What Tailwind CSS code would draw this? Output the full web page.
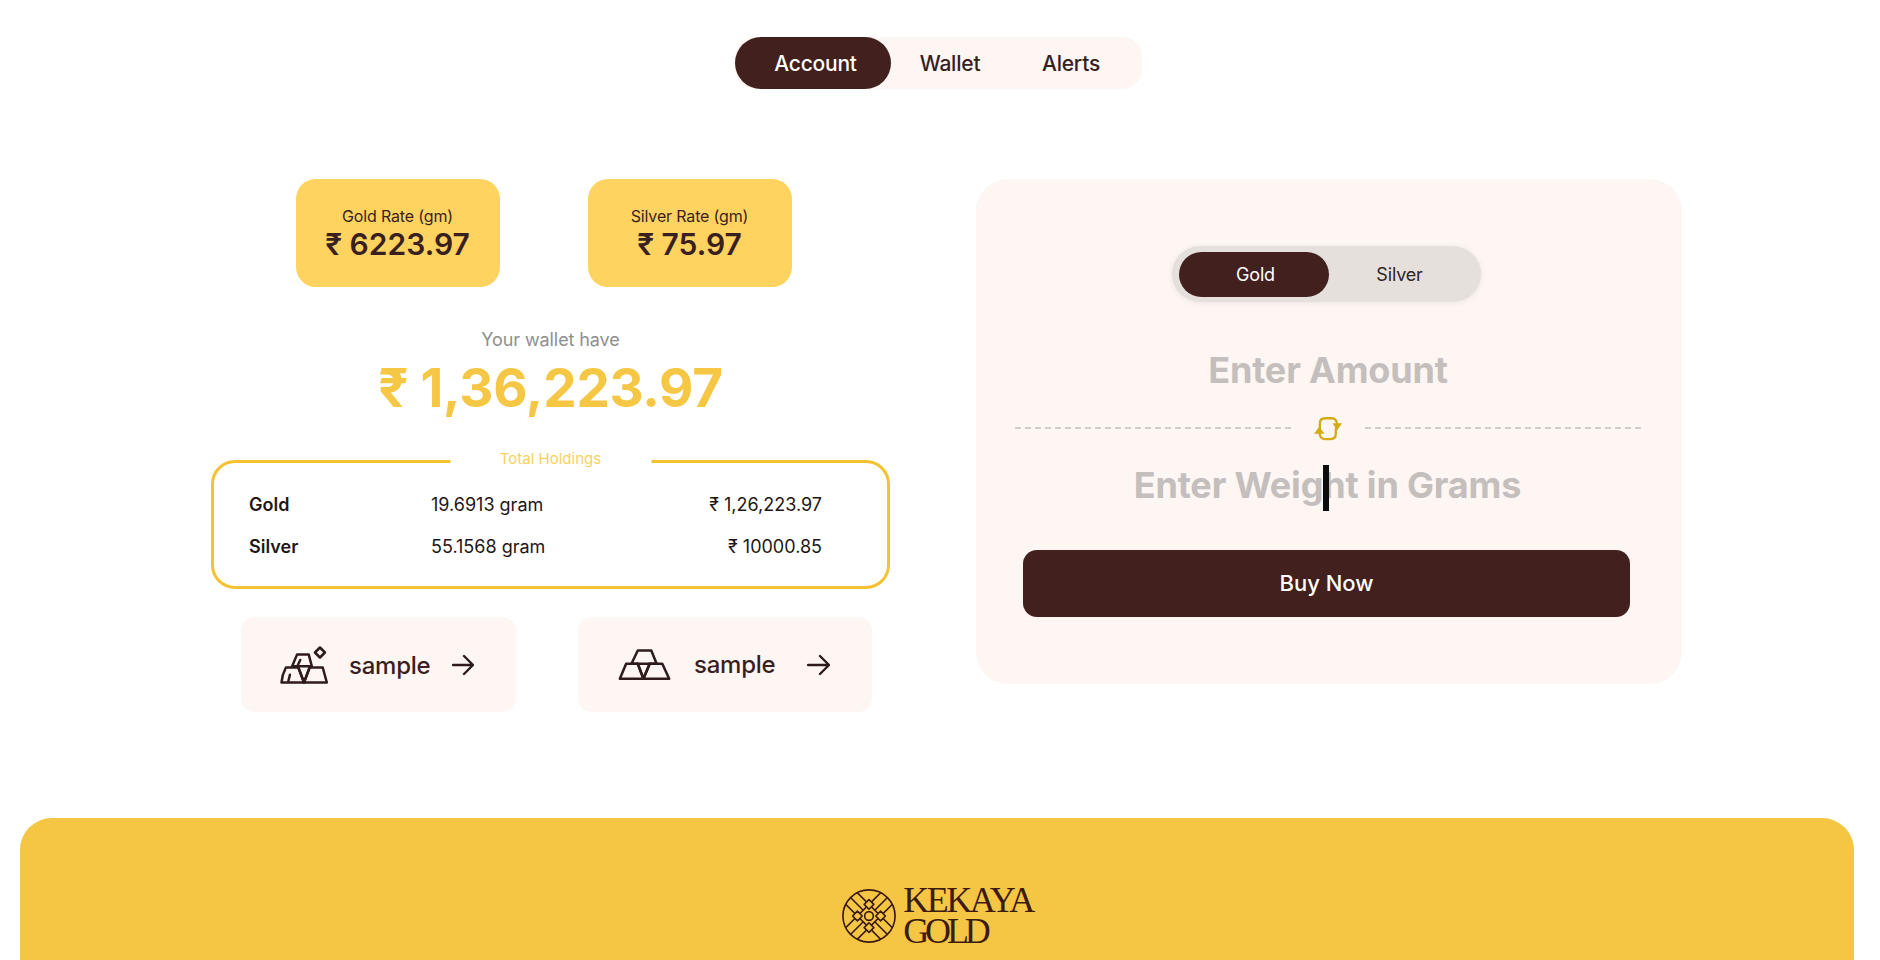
<!DOCTYPE html>
<html lang="en">
<head>
<meta charset="utf-8">
<script src="https://cdn.jsdelivr.net/npm/@tailwindcss/browser@4"></script>
<title>Kekaya Gold</title>
</head>
<body class="bg-white font-['Inter',sans-serif] text-[#3a1f1f] h-[960px] overflow-hidden">
<nav class="pt-[37px] flex justify-center">
  <div class="flex items-center h-[52px] w-[407px] mr-[3px] bg-[#fdf6f3] rounded-[20px] text-[21px] tracking-[-0.01em] font-medium">
    <a class="w-[156px] h-full pl-[5px] pt-[1px] rounded-full bg-[#42201e] text-white flex items-center justify-center">Account</a>
    <a class="w-[118px] pt-[1px] text-center text-[#35201f]">Wallet</a>
    <a class="w-[124px] pt-[1px] text-center text-[#35201f]">Alerts</a>
  </div>
</nav>

<main class="mt-[90px] flex pl-[211px] gap-[86px]">
  <section class="w-[679px] flex flex-col items-center">
    <div class="flex gap-[88px] pr-[14px]">
      <div class="w-[204px] h-[108px] rounded-[20px] bg-[#ffd35f] flex flex-col items-center justify-center pt-[1px]">
        <span class="text-[16px] leading-[20px] mb-[1px] tracking-[-0.01em]">Gold Rate (gm)</span>
        <span class="text-[30px] leading-[34px] font-semibold">₹ 6223.97</span>
      </div>
      <div class="w-[204px] h-[108px] rounded-[20px] bg-[#ffd35f] flex flex-col items-center justify-center pt-[1px]">
        <span class="text-[16px] leading-[20px] mb-[1px] tracking-[-0.01em]">Silver Rate (gm)</span>
        <span class="text-[30px] leading-[34px] font-semibold">₹ 75.97</span>
      </div>
    </div>
    <p class="mt-[41px] text-[18px] leading-[24px] tracking-[-0.005em] text-[#8f8f8f]">Your wallet have</p>
    <p class="mt-[4px] text-[53px] leading-[64px] font-bold tracking-[-0.005em] text-[#f6c744]">₹ 1,36,223.97</p>

    <div class="mt-[40px] w-full h-[129px] border-[3px] border-[#f5c233] rounded-[24px] pl-[35px] pt-[30px] relative">
      <span class="absolute left-1/2 -translate-x-1/2 -top-[13px] w-[201px] bg-white text-center text-[15px] leading-[18px] text-[#f7d25e]">Total Holdings</span>
      <div class="grid grid-cols-[182px_1fr_auto] items-center text-[18px] leading-[24px] pr-[65px] gap-y-[18px] text-[#1f1616]">
        <span class="font-semibold">Gold</span>
        <span>19.6913 gram</span>
        <span class="text-right">₹ 1,26,223.97</span>
        <span class="font-semibold">Silver</span>
        <span>55.1568 gram</span>
        <span class="text-right">₹ 10000.85</span>
      </div>
    </div>

    <div class="mt-[28px] w-full flex pl-[30px] gap-[62px] text-[24px] font-medium tracking-[-0.01em]">
      <a class="w-[275px] h-[95px] rounded-[14px] bg-[#fdf6f3] flex items-center pl-[38px]">
        <svg class="w-[50px] h-[40px] mr-[3px]" viewBox="50 40 160 128" fill="none" stroke="#2f1b1b" stroke-width="8" stroke-linejoin="round" stroke-linecap="round">
          <path d="M108 70H145L155 108H92Z"/>
          <path d="M72 112H112L130 160H58Q60 135 72 112Z"/>
          <path d="M148 112H190L203 160H130Z"/>
          <path d="M112 112L130 160L148 112"/>
          <path d="M118 88L110 105M85 135L80 155"/>
          <path d="M181 48L197 64L181 80L165 64Z"/>
        </svg>
        <span class="ml-[17px] w-[103px] pt-[3px]">sample</span>
        <svg class="w-[22px] h-[22px]" viewBox="0 0 22 22" fill="none" stroke="#2f1b1b" stroke-width="2.4" stroke-linecap="round" stroke-linejoin="round"><path d="M1 11H21M12 2L21 11L12 20"/></svg>
      </a>
      <a class="w-[294px] h-[95px] rounded-[14px] bg-[#fdf6f3] flex items-center pl-[40px]">
        <svg class="w-[54px] h-[33px] mr-[3px]" viewBox="50 50 170 105" fill="none" stroke="#2f1b1b" stroke-width="8" stroke-linejoin="round" stroke-linecap="round">
          <path d="M112 58H155L172 100H92Z"/>
          <path d="M75 100H112L130 148H55Z"/>
          <path d="M150 100H190L212 148H130Z"/>
          <path d="M112 100L130 148L150 100"/>
        </svg>
        <span class="ml-[19px] w-[113px] pt-[1px]">sample</span>
        <svg class="w-[23px] h-[22px]" viewBox="0 0 23 22" fill="none" stroke="#2f1b1b" stroke-width="2.4" stroke-linecap="round" stroke-linejoin="round"><path d="M1 11H22M13 2L22 11L13 20"/></svg>
      </a>
    </div>
  </section>

  <section class="w-[706px] h-[505px] rounded-[32px] bg-[#fdf6f3] flex flex-col items-center">
    <div class="mt-[67px] w-[309px] h-[56px] rounded-full bg-[#e6e0dd] flex items-center pl-[7px] text-[18px] tracking-[-0.01em] mr-[6px] shadow-[0_1px_6px_rgba(60,30,20,0.08)]">
      <span class="w-[150px] h-[45px] pl-[4px] rounded-full bg-[#42201e] text-white flex items-center justify-center">Gold</span>
      <span class="ml-[11px] w-[120px] text-center text-[#2f2524]">Silver</span>
    </div>
    <p class="mt-[46px] mr-[2px] text-[36px] leading-[44px] font-bold tracking-[-0.005em] text-[#c4bebc]">Enter Amount</p>
    <div class="mt-[23px] w-[626px] flex items-center justify-between ml-[-2px]">
      <span class="w-[276px] border-t-2 border-dashed border-[#d3cdca]"></span>
      <svg class="w-[28px] h-[26px]" viewBox="70 42 86 80" fill="none" stroke="#d4aa12" stroke-width="7" stroke-linejoin="round">
        <path d="M88 85V68Q88 52 104 52H124Q140 52 141 72"/>
        <path d="M127 67H156L141 90Z" fill="#d4aa12" stroke="none"/>
        <path d="M137 82V100Q137 116 121 116H102Q88 116 87 96"/>
        <path d="M70 100H102L86 78Z" fill="#d4aa12" stroke="none"/>
      </svg>
      <span class="w-[276px] border-t-2 border-dashed border-[#d3cdca]"></span>
    </div>
    <div class="relative mt-[20px] mr-[3px]">
      <p class="text-[36px] leading-[48px] font-bold tracking-[-0.005em] text-[#c4bebc]">Enter Weight in Grams</p>
      <span class="absolute left-[189px] top-[4px] w-[6px] h-[46px] bg-[#0c0c0c]"></span>
    </div>
    <button class="mt-[41px] w-[607px] h-[67px] rounded-[14px] bg-[#42201e] text-white text-[22px] font-medium mr-[5px]">Buy Now</button>
  </section>
</main>

<footer class="mt-[106px] ml-[20px] mr-[26px] h-[142px] rounded-t-[32px] bg-[#f5c544] flex items-start justify-center pt-[67px]">
  <div class="flex items-center gap-[6px]">
    <svg class="w-[56px] h-[56px]" viewBox="0 0 58 58" fill="none" stroke="#3c1b10" stroke-width="1.7">
      <clipPath id="logo-clip"><circle cx="29" cy="29" r="27"/></clipPath>
      <circle cx="29" cy="29" r="27"/>
      <g clip-path="url(#logo-clip)">
        <path d="M0 -12L70 58M-12 0L58 70M58 -12L-12 58M70 0L0 70"/>
        <path d="M6 6L23 23M35 35L52 52M52 6L35 23M23 35L6 52"/>
      </g>
      <circle cx="29" cy="29" r="4.5" fill="#f5c544"/>
      <path d="M29 12L34 17L29 22L24 17ZM29 36L34 41L29 46L24 41ZM12 29L17 24L22 29L17 34ZM36 29L41 24L46 29L41 34Z" fill="#f5c544" stroke-linejoin="round"/>
    </svg>
    <div class="font-['Liberation_Serif',serif] text-[36px] leading-[31px] text-[#3c1b10]">
      <div class="tracking-[-0.07em]">KEKAYA</div>
      <div class="tracking-[-0.115em]">GOLD</div>
    </div>
  </div>
</footer>
</body>
</html>
